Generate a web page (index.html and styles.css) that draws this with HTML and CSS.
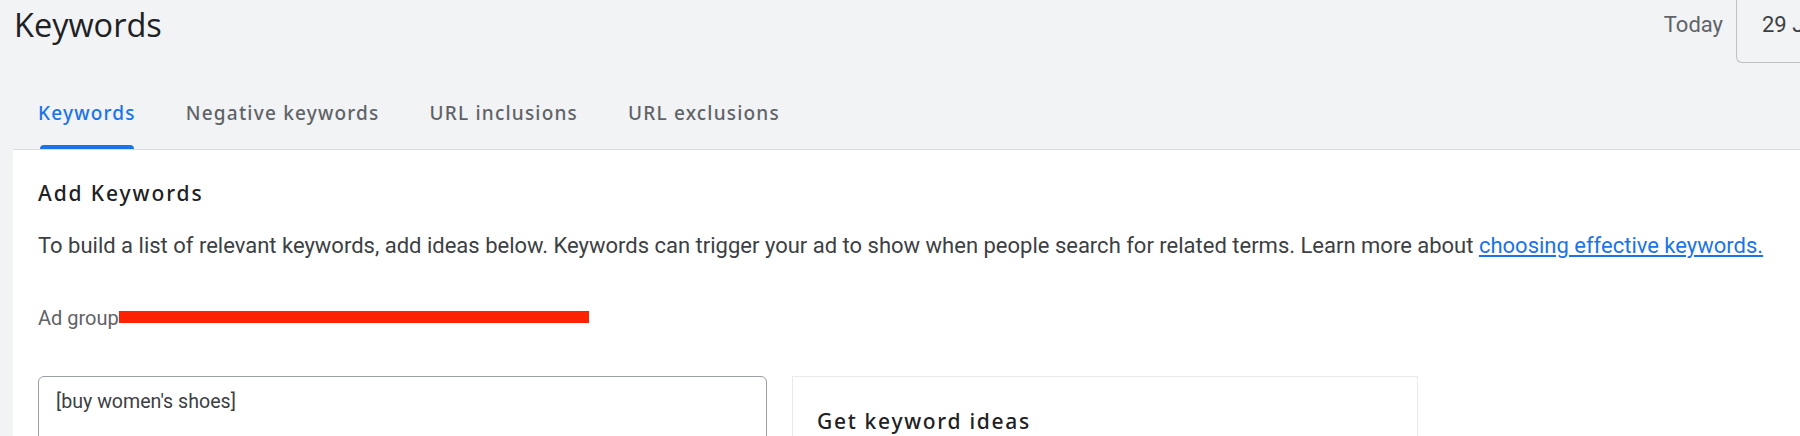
FILE: index.html
```html
<!DOCTYPE html>
<html lang="en">
<head>
<meta charset="utf-8">
<title>Keywords</title>
<link rel="stylesheet" href="styles.css">
</head>
<body>
<header class="page-header">
  <h1 class="page-title">Keywords</h1>
  <div class="date-area">
    <span class="date-label">Today</span>
    <div class="date-box"><span class="date-value">29 Jan 2024</span></div>
  </div>
</header>
<main class="main">
  <nav class="tabs">
    <div class="tab active"><span class="tab-label">Keywords</span><span class="tab-ink"></span></div>
    <div class="tab"><span class="tab-label">Negative keywords</span><span class="tab-ink"></span></div>
    <div class="tab"><span class="tab-label">URL inclusions</span><span class="tab-ink"></span></div>
    <div class="tab"><span class="tab-label">URL exclusions</span><span class="tab-ink"></span></div>
  </nav>
  <section class="card">
    <h2 class="card-title">Add Keywords</h2>
    <p class="card-desc">To build a list of relevant keywords, add ideas below. Keywords can trigger your ad to show when people search for related terms. Learn more about <a class="link" href="#">choosing effective keywords.</a></p>
    <div class="adgroup"><span class="adgroup-label">Ad group</span><span class="redact"></span></div>
    <div class="editor-row">
      <div class="kw-input">[buy women's shoes]</div>
      <div class="ideas-panel">
        <h3 class="ideas-title">Get keyword ideas</h3>
      </div>
    </div>
  </section>
</main>
</body>
</html>
```
FILE: styles.css
```css
html, body {
  margin: 0;
  padding: 0;
}
html {
  overflow: hidden;
}
body {
  background: #f1f3f4;
  font-family: Roboto, "Liberation Sans", Arial, sans-serif;
  color: #202124;
  width: 1800px;
  height: 436px;
  overflow: hidden;
}
.page-header {
  display: flex;
  justify-content: space-between;
  align-items: flex-start;
  height: 63px;
  padding-left: 14px;
  overflow: hidden;
}
.page-title {
  margin: 0;
  font-family: "Open Sans", Roboto, sans-serif;
  font-size: 32.5px;
  font-weight: 400;
  line-height: 50px;
  color: #202124;
}
.date-area {
  display: flex;
  align-items: flex-start;
  height: 63px;
}
.date-label {
  font-size: 22px;
  line-height: 50px;
  color: #5f6368;
  margin-right: 13px;
}
.date-box {
  flex: none;
  box-sizing: border-box;
  width: 64px;
  height: 63px;
  padding-left: 25px;
  border-left: 1px solid #bdc1c6;
  border-bottom: 1px solid #bdc1c6;
  border-bottom-left-radius: 6px;
  white-space: nowrap;
  overflow: hidden;
}
.date-value {
  display: block;
  font-size: 22px;
  line-height: 50px;
  color: #3c4043;
}
.main {
  margin-left: 13px;
}
.tabs {
  display: flex;
  height: 86px;
  border-bottom: 1px solid #dadce0;
}
.tab {
  display: flex;
  flex-direction: column;
  justify-content: flex-end;
  padding: 0 25px;
}
.tab-label {
  font-family: "Noto Sans", "Open Sans", sans-serif;
  font-size: 19px;
  font-weight: 500;
  letter-spacing: 1.2px;
  line-height: 24px;
  color: #5f6368;
  margin-bottom: 20px;
  white-space: nowrap;
}
.tab-ink {
  height: 4px;
  margin: 0 2px;
  border-radius: 4px 4px 0 0;
  background: transparent;
}
.tab.active .tab-label {
  color: #1a73e8;
}
.tab.active .tab-ink {
  background: #1a73e8;
}
.card {
  background: #ffffff;
  padding: 28px 25px 0 25px;
  height: 300px;
}
.card-title {
  margin: 0;
  font-family: "Noto Sans", "Open Sans", sans-serif;
  font-size: 21px;
  font-weight: 500;
  letter-spacing: 1.9px;
  line-height: 30px;
  color: #202124;
}
.card-desc {
  margin: 24px 0 0 0;
  font-size: 22px;
  line-height: 28px;
  color: #3c4043;
  white-space: nowrap;
}
.link {
  color: #1a73e8;
  text-decoration: underline;
}
.adgroup {
  display: flex;
  align-items: center;
  margin-top: 44px;
  height: 28px;
}
.adgroup-label {
  font-size: 20px;
  color: #5f6368;
}
.redact {
  display: inline-block;
  width: 470px;
  height: 12px;
  background: #ff2200;
  margin-top: -2px;
}
.editor-row {
  display: flex;
  align-items: flex-start;
  margin-top: 44px;
}
.kw-input {
  box-sizing: border-box;
  width: 729px;
  height: 80px;
  border: 1px solid #9aa0a6;
  border-radius: 6px;
  padding: 12px 17px;
  font-size: 19.6px;
  line-height: 26px;
  color: #3c4043;
}
.ideas-panel {
  box-sizing: border-box;
  width: 626px;
  height: 80px;
  margin-left: 25px;
  border: 1px solid #e8eaed;
  padding: 30px 24px;
}
.ideas-title {
  margin: 0;
  font-family: "Noto Sans", "Open Sans", sans-serif;
  font-size: 21px;
  font-weight: 500;
  letter-spacing: 1.7px;
  line-height: 28px;
  color: #202124;
}
```
